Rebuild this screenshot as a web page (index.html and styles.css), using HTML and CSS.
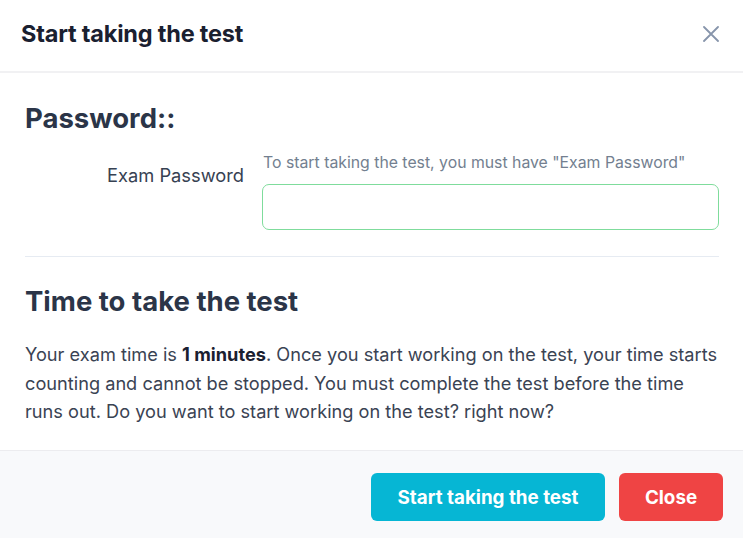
FILE: index.html
```html
<!DOCTYPE html>
<html>
<head>
<meta charset="utf-8">
<link rel="stylesheet" href="styles.css">
</head>
<body>
<div class="modal">
  <header class="modal-header">
    <h1 class="modal-title">Start taking the test</h1>
    <button class="close-x" aria-label="Close">
      <svg width="16" height="16" viewBox="0 0 16 16"><path d="M1 1L15 15M15 1L1 15" stroke="#8795ab" stroke-width="1.8" stroke-linecap="round" fill="none"/></svg>
    </button>
  </header>
  <section class="modal-body">
    <h2 class="section-title">Password::</h2>
    <div class="form-row">
      <label class="form-label" for="pw">Exam Password</label>
      <div class="form-field">
        <div class="help">To start taking the test, you must have "Exam Password"</div>
        <input id="pw" class="input" type="password">
      </div>
    </div>
    <hr class="divider">
    <h2 class="section-title time-title">Time to take the test</h2>
    <p class="text">Your exam time is <b>1 minutes</b>. Once you start working on the test, your time starts counting and cannot be stopped. You must complete the test before the time runs out. Do you want to start working on the test? right now?</p>
  </section>
  <footer class="modal-footer">
    <button class="btn btn-start">Start taking the test</button>
    <button class="btn btn-close">Close</button>
  </footer>
</div>
</body>
</html>
```
FILE: styles.css
```css
* { box-sizing: border-box; }
html, body { margin: 0; padding: 0; background: #fff; }
body { font-family: "Inter", "Noto Sans", sans-serif; color: #2d3748; }
.modal { width: 743px; height: 538px; display: flex; flex-direction: column; }
.modal-header {
  height: 73px; display: flex; align-items: center; justify-content: space-between;
  padding: 0 24px 4px 21px; border-bottom: 2px solid #f1f1f3;
}
.modal-title { margin: 0; font-size: 23.5px; font-weight: 700; color: #1a2030; letter-spacing: -0.2px; }
.close-x { background: none; border: 0; padding: 0; width: 16px; height: 16px; display: flex; }
.modal-body { flex: 1; padding: 28px 24px 0 25px; }
.section-title { margin: 0; font-size: 27.5px; font-weight: 700; color: #2b3548; line-height: 34px; }
.form-row { display: flex; margin-top: 18px; }
.form-label { width: 237px; flex: none; text-align: right; padding-top: 11px; padding-right: 18px; font-size: 18.3px; color: #364152; }
.form-field { flex: 1; }
.help { font-size: 15.8px; color: #737f90; padding-left: 1px; line-height: 20px; }
.input { display: block; width: 100%; height: 46px; margin-top: 11px; border: 1.5px solid #7fdc9c; border-radius: 7px; outline: none; }
.divider { border: 0; border-top: 1px solid #e6ebf2; margin: 26px 0 0 0; }
.time-title { margin-top: 27px; }
.text { margin: 22px 0 0 0; font-size: 18.2px; line-height: 28.5px; color: #3a4353; }
.text b { color: #1a2030; }
.modal-footer {
  height: 88px; background: #f8f9fb; border-top: 1px solid #ececef;
  display: flex; justify-content: flex-end; align-items: flex-start; gap: 14px; padding: 22px 20px 0 0;
}
.btn { height: 48px; border: 0; border-radius: 6px; color: #fff; font-family: inherit; font-size: 18.8px; font-weight: 700; padding: 0; }
.btn-start { background: #06b6d4; width: 234px; }
.btn-close { background: #ef4444; width: 104px; }
```
